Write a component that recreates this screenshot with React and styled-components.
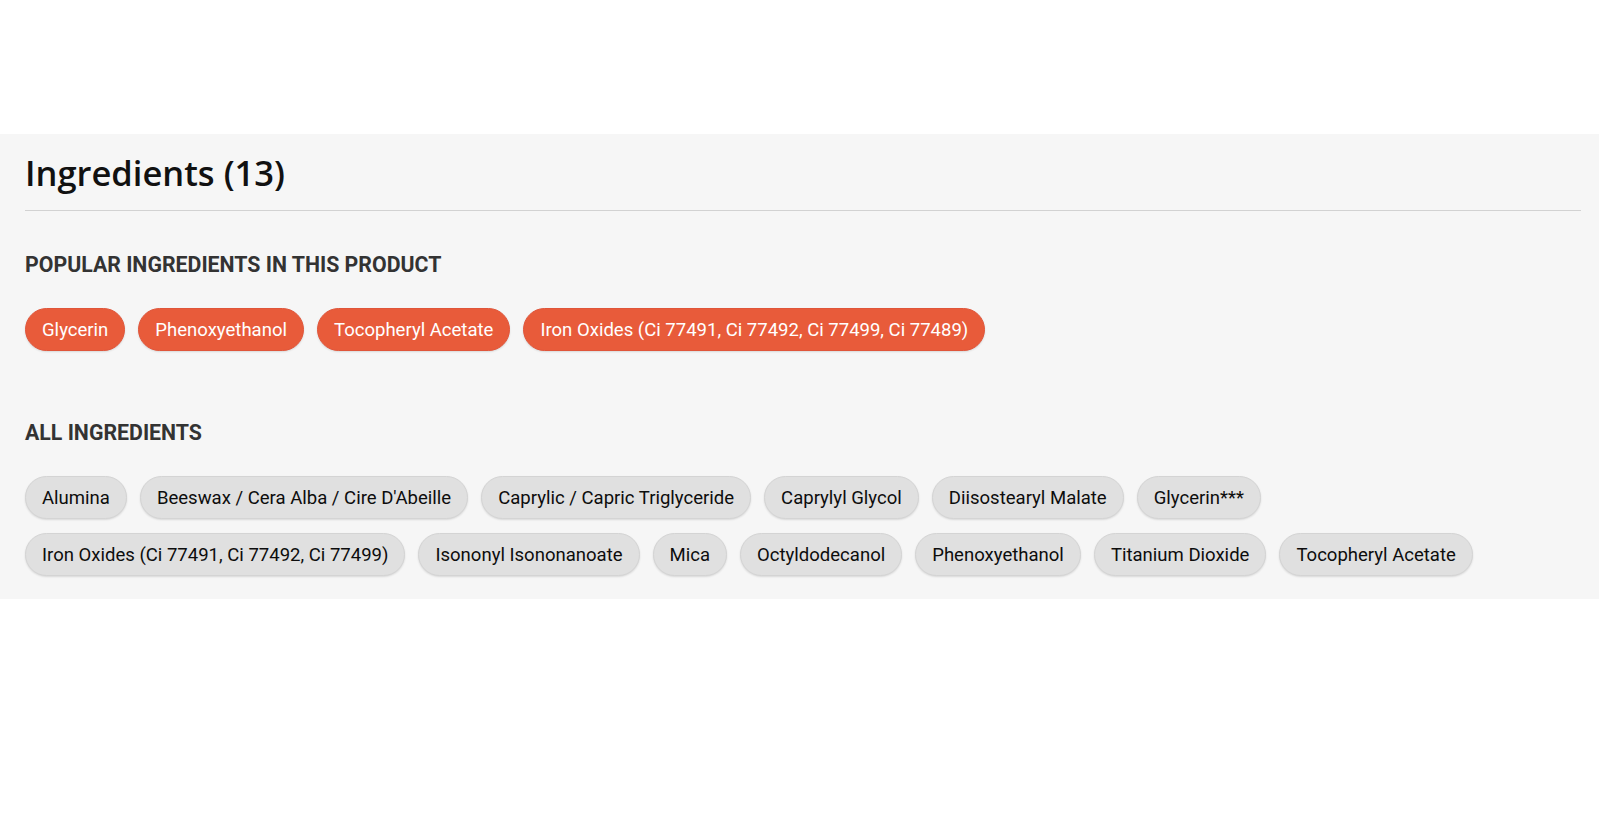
import React from "react";
import styled, { createGlobalStyle } from "styled-components";

const Global = createGlobalStyle`
  html, body { margin: 0; padding: 0; background: #ffffff; }
  body { font-family: Roboto, "Liberation Sans", sans-serif; }
`;

const Page = styled.div`
  padding-top: 134px;
  min-height: 815px;
  box-sizing: border-box;
`;

const Section = styled.section`
  background: #f6f6f6;
  padding: 16px 18px 23px 25px;
`;

const Title = styled.h2`
  margin: 0;
  font-family: "Open Sans", "Liberation Sans", sans-serif;
  font-weight: 600;
  font-size: 34.5px;
  line-height: 46px;
  color: #111;
  padding-bottom: 14px;
  border-bottom: 1px solid #d2d2d2;
`;

const Group = styled.div`
  margin-top: ${(p) => p.$top}px;
`;

const Heading = styled.h3`
  margin: 0;
  font-family: Roboto, "Liberation Sans", sans-serif;
  font-weight: 700;
  font-size: 21.3px;
  line-height: 24px;
  color: #333;
  text-transform: uppercase;
`;

const Chips = styled.div`
  display: flex;
  flex-wrap: wrap;
  column-gap: 13px;
  row-gap: 14px;
  margin-top: 31px;
`;

const Chip = styled.span`
  display: inline-flex;
  align-items: center;
  height: 43px;
  box-sizing: border-box;
  padding: 0 16px;
  border-radius: 22px;
  font-size: 18.55px;
  font-family: Roboto, "Liberation Sans", sans-serif;
  background: ${(p) => (p.$popular ? "#e85b3a" : "#e0e0e0")};
  color: ${(p) => (p.$popular ? "#ffffff" : "#0d0d0d")};
  border: 1px solid ${(p) => (p.$popular ? "#e0553a" : "#d4d4d4")};
  box-shadow: 0 1px 2px rgba(0, 0, 0, 0.12);
  white-space: nowrap;
`;

const popular = [
  "Glycerin",
  "Phenoxyethanol",
  "Tocopheryl Acetate",
  "Iron Oxides (Ci 77491, Ci 77492, Ci 77499, Ci 77489)",
];

const all = [
  "Alumina",
  "Beeswax / Cera Alba / Cire D'Abeille",
  "Caprylic / Capric Triglyceride",
  "Caprylyl Glycol",
  "Diisostearyl Malate",
  "Glycerin***",
  "Iron Oxides (Ci 77491, Ci 77492, Ci 77499)",
  "Isononyl Isononanoate",
  "Mica",
  "Octyldodecanol",
  "Phenoxyethanol",
  "Titanium Dioxide",
  "Tocopheryl Acetate",
];

export default function App() {
  return (
    <Page>
      <Global />
      <Section>
        <Title>Ingredients (13)</Title>
        <Group $top={42}>
          <Heading>Popular ingredients in this product</Heading>
          <Chips>
            {popular.map((n) => (
              <Chip key={n} $popular>
                {n}
              </Chip>
            ))}
          </Chips>
        </Group>
        <Group $top={70}>
          <Heading>All ingredients</Heading>
          <Chips>
            {all.map((n) => (
              <Chip key={n}>{n}</Chip>
            ))}
          </Chips>
        </Group>
      </Section>
    </Page>
  );
}
